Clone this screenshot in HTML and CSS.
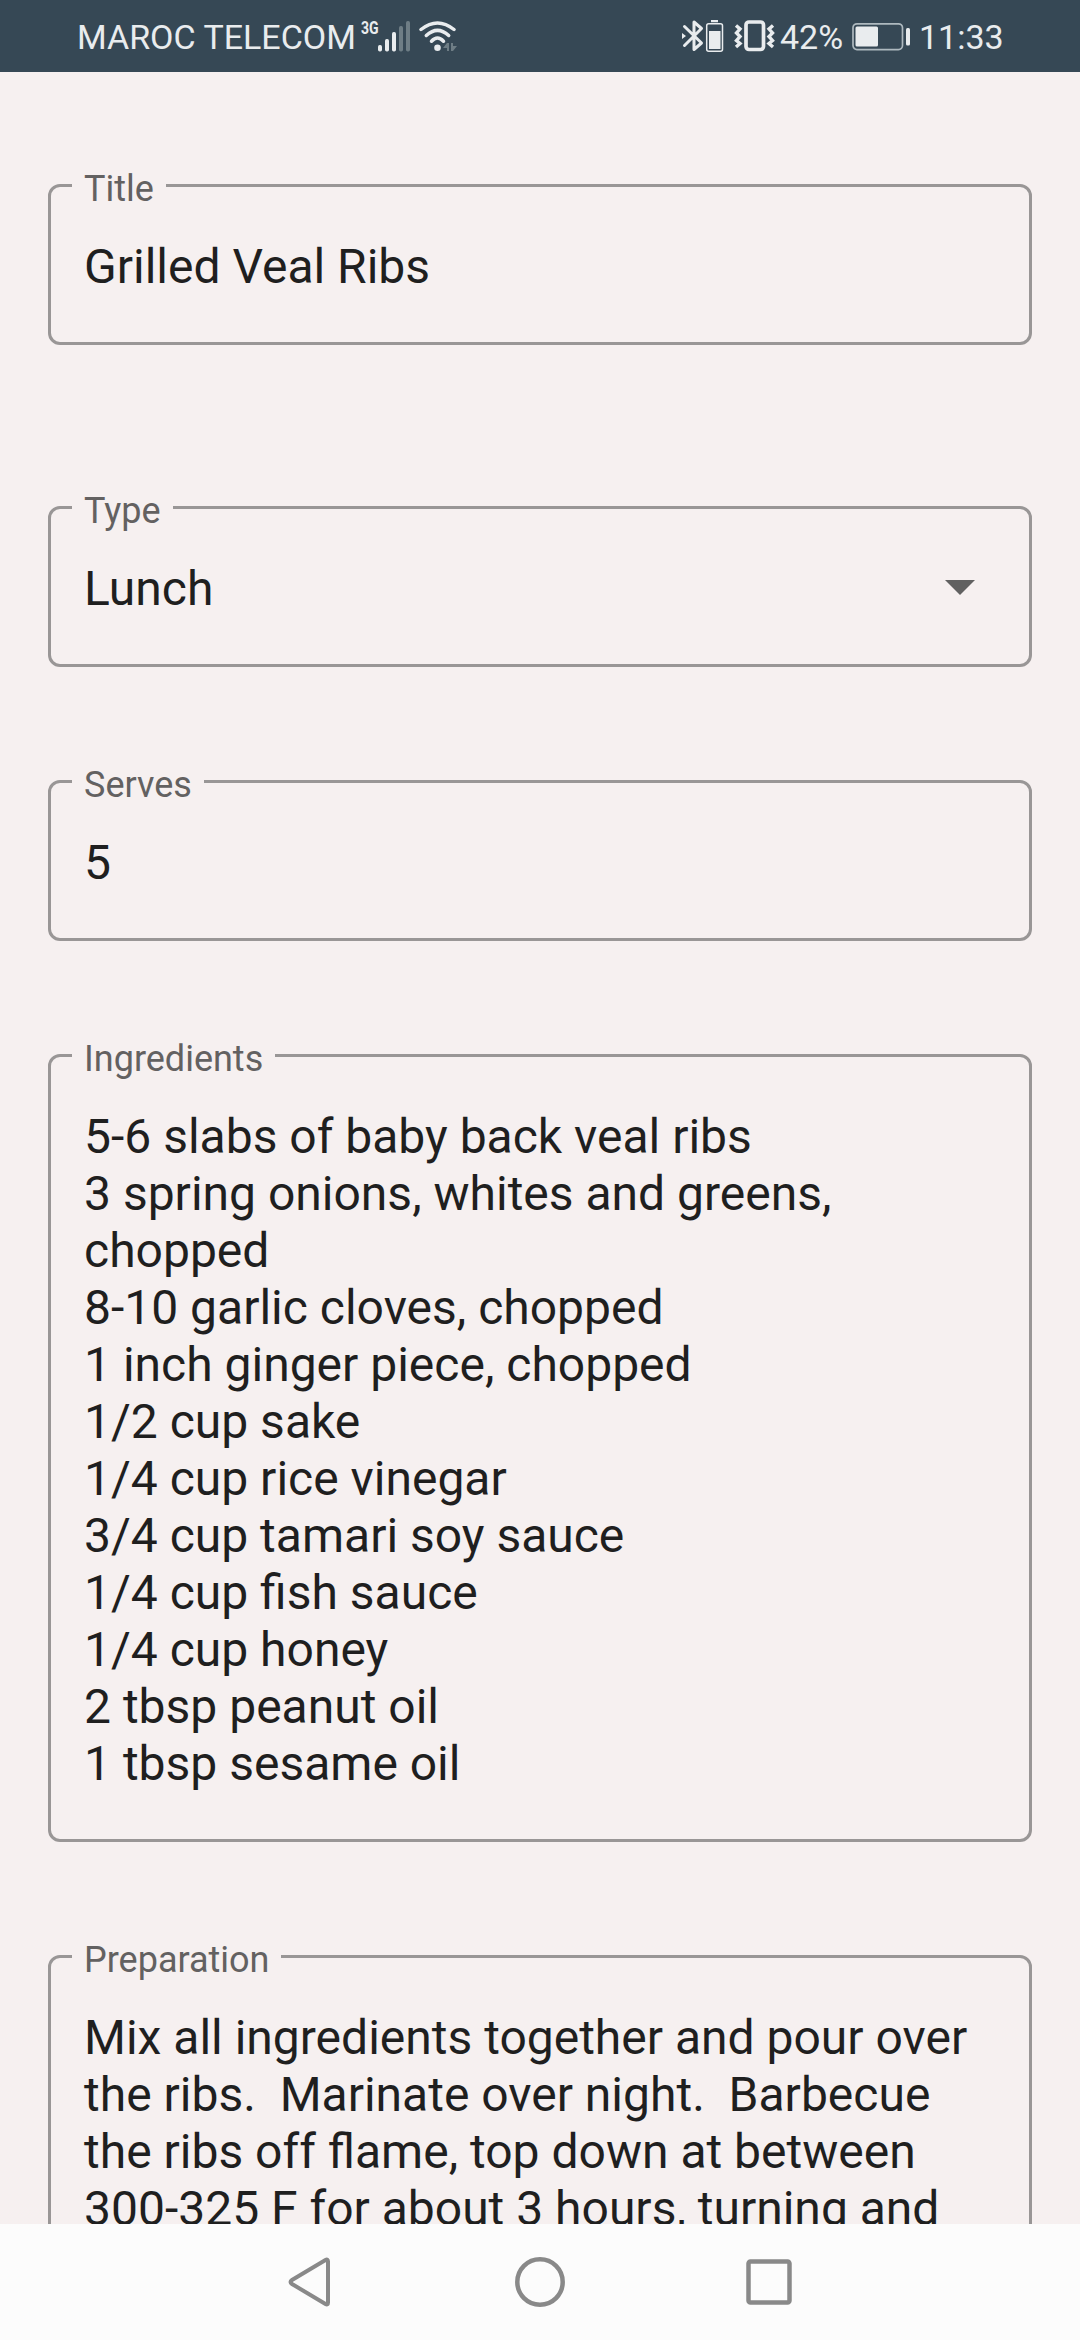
FILE: index.html
```html
<!DOCTYPE html>
<html lang="en">
<head>
<meta charset="utf-8">
<title>Recipe</title>
<link rel="stylesheet" href="styles.css">
</head>
<body>
<div class="screen">
  <header class="status-bar">
    <div class="status-left">
      <span class="status-text carrier">MAROC TELECOM</span>
      <span class="network">3G</span>
      <svg class="signal" width="34" height="72" viewBox="0 0 34 72">
        <g fill="#e9ecee">
          <rect x="0" y="45" width="4" height="6.500" rx="1.700"/>
          <rect x="7" y="39" width="4" height="12.500" rx="1.700"/>
          <rect x="14" y="32" width="4" height="19.500" rx="1.700"/>
        </g>
        <g fill="#6e7d85">
          <rect x="21" y="26" width="4" height="25.500" rx="1.700"/>
          <rect x="28" y="21" width="4" height="30.500" rx="1.700"/>
        </g>
      </svg>
      <svg class="wifi" width="40" height="72" viewBox="0 0 40 72">
        <g fill="none" stroke="#e9ecee" stroke-width="3.500" stroke-linecap="round">
          <path d="M2 29.500Q18.500 16.500 35 29.500"/>
          <path d="M7.300 35.500Q18.500 25.300 29.700 35.500"/>
          <path d="M12.500 41.200Q18.500 35 24.500 41.200"/>
        </g>
        <circle cx="18.500" cy="47.700" r="3.300" fill="#e9ecee"/>
        <path d="M24 48l4-5h2v8h-2v-3zM32 43h2v3h4l-4 5h-2z" fill="#6e7d85"/>
      </svg>
    </div>
    <div class="status-right">
      <svg width="98" height="72" viewBox="0 0 98 72">
        <g fill="none" stroke="#e9ecee">
          <path d="M4.500 26.500L21.500 43L14 49.500V22L21.500 28.500L4.500 45.500" stroke-width="3" stroke-linejoin="round" stroke-linecap="round"/>
          <rect x="26.700" y="23.800" width="15.800" height="27.500" rx="2" stroke-width="1.500"/>
          <path d="M56 25.500l4 3.500-3.500 4 3.500 3.500-3.500 4 3.500 3-4 3.500M93 25.500l-4 3.500 3.500 4-3.500 3.500 3.500 4-3.500 3 4 3.500" stroke-width="3.400"/>
          <rect x="66" y="22" width="17.500" height="27.500" rx="3" stroke-width="3.700"/>
        </g>
        <path d="M2 33l4 3-4 3zM31 20h7v2.200h-7zM29 31h11.500v18H29z" fill="#e9ecee"/>
      </svg>
      <span class="status-text percent">42%</span>
      <svg class="battery" width="60" height="72" viewBox="0 0 60 72">
        <rect x="1" y="23.800" width="49.500" height="25.800" rx="4" fill="none" stroke="#aeb9bf" stroke-width="1.700"/>
        <rect x="3.500" y="26.500" width="22.500" height="20" rx="1.500" fill="#e9ecee"/>
        <rect x="54" y="28" width="4" height="17.500" rx="1.500" fill="#e9ecee"/>
      </svg>
      <span class="status-text clock">11:33</span>
    </div>
  </header>

  <main class="form">
    <section class="field field-title">
      <span class="label">Title</span>
      <div class="value">Grilled Veal Ribs</div>
    </section>
    <section class="field field-select">
      <span class="label">Type</span>
      <div class="value">Lunch</div>
      <svg class="caret" width="30" height="15" viewBox="0 0 30 15"><path d="M0 0h30L15 15z" fill="#616161"/></svg>
    </section>
    <section class="field">
      <span class="label">Serves</span>
      <div class="value">5</div>
    </section>
    <section class="field">
      <span class="label">Ingredients</span>
      <div class="value">5-6 slabs of baby back veal ribs
3 spring onions, whites and greens,
chopped
8-10 garlic cloves, chopped
1 inch ginger piece, chopped
1/2 cup sake
1/4 cup rice vinegar
3/4 cup tamari soy sauce
1/4 cup fish sauce
1/4 cup honey
2 tbsp peanut oil
1 tbsp sesame oil</div>
    </section>
    <section class="field">
      <span class="label">Preparation</span>
      <div class="value">Mix all ingredients together and pour over
the ribs.  Marinate over night.  Barbecue
the ribs off flame, top down at between
300-325 F for about 3 hours, turning and</div>
    </section>
  </main>

  <nav class="nav-bar">
    <svg width="50" height="60" viewBox="0 0 50 60"><path d="M42 9.500V50.500Q42 53.500 39.500 52L6 32Q3 30 6 28L39.500 8Q42 6.500 42 9.500Z" fill="none" stroke="#898989" stroke-width="4"/></svg>
    <svg width="50" height="60" viewBox="0 0 50 60"><circle cx="25" cy="30" r="22.700" fill="none" stroke="#898989" stroke-width="4.500"/></svg>
    <svg width="50" height="60" viewBox="0 0 50 60"><rect x="4.500" y="9.500" width="41" height="41" rx="2" fill="none" stroke="#898989" stroke-width="4.500"/></svg>
  </nav>
</div>
</body>
</html>
```
FILE: styles.css
```css
* {
  box-sizing: border-box;
}

body {
  margin: 0;
  font-family: Roboto, "Liberation Sans", sans-serif;
}

svg {
  display: block;
  flex: none;
}

.screen {
  display: flex;
  flex-direction: column;
  width: 1080px;
  height: 2340px;
  overflow: hidden;
  background: #f6f0f0;
}

.status-bar {
  display: flex;
  flex: none;
  justify-content: space-between;
  height: 72px;
  padding: 0 77px;
  background: #364855;
  color: #e9ecee;
}

.status-left,
.status-right {
  display: flex;
}

.status-text {
  font-size: 34px;
  line-height: 74px;
  white-space: nowrap;
}

.carrier {
  width: 284px;
}

.network {
  width: 17px;
  margin-top: 17px;
  font-size: 18px;
  font-weight: 700;
  line-height: 21px;
  transform: scaleX(0.78);
  transform-origin: 0 0;
}

.wifi {
  margin-left: 7px;
}

.percent {
  width: 74px;
  padding-left: 2px;
}

.clock {
  width: 84px;
  margin-left: 7px;
}

.form {
  display: flex;
  flex: 1;
  flex-direction: column;
  gap: 113px;
  min-height: 0;
  padding: 112px 48px 0;
  overflow: hidden;
}

.field {
  position: relative;
  display: flex;
  flex: none;
  align-items: center;
  justify-content: space-between;
  padding: 51px 33px 47px;
  border: 3px solid #999696;
  border-radius: 12px;
}

.field-title {
  margin-bottom: 48px;
}

.field-select {
  padding-right: 54px;
}

.caret {
  margin-top: -2px;
}

.label {
  position: absolute;
  top: -19px;
  left: 21px;
  padding: 0 12px;
  background: #f6f0f0;
  color: #636161;
  font-size: 36px;
  line-height: 42px;
  white-space: nowrap;
}

.value {
  color: #1f1f1f;
  font-size: 48px;
  line-height: 57px;
  white-space: pre;
}

.nav-bar {
  display: flex;
  flex: none;
  align-items: center;
  justify-content: center;
  gap: 179px;
  height: 116px;
  background: #fcfcfc;
}
```
